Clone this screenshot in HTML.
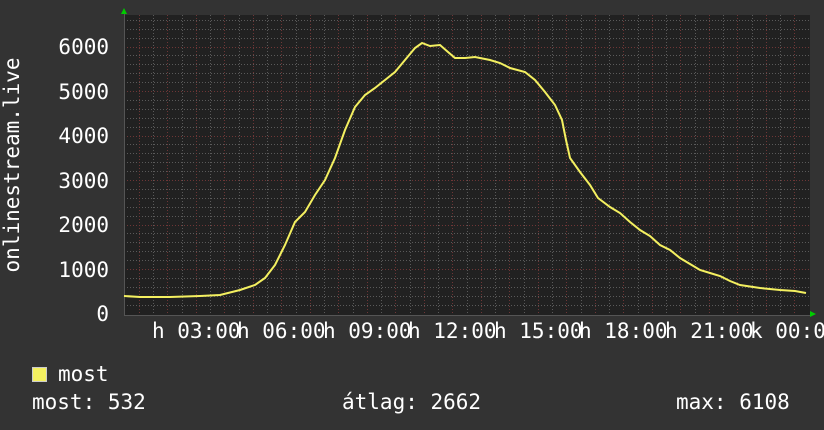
<!DOCTYPE html>
<html><head><style>
html,body{margin:0;padding:0;background:#333;}
svg{display:block}
text{font-family:"DejaVu Sans Mono","Liberation Mono",monospace;fill:#fff;font-size:21px}
</style></head><body>
<svg width="824" height="430" viewBox="0 0 824 430" xmlns="http://www.w3.org/2000/svg">
<rect width="824" height="430" fill="#333"/>
<rect x="124" y="15" width="686" height="300" fill="#212121"/>
<g stroke="#5a5a5a" stroke-width="1" stroke-dasharray="1,2">
<path d="M124 305.5H810M124 296.5H810M124 287.5H810M124 278.5H810M124 260.5H810M124 251.5H810M124 242.5H810M124 233.5H810M124 216.5H810M124 207.5H810M124 198.5H810M124 189.5H810M124 171.5H810M124 162.5H810M124 153.5H810M124 144.5H810M124 127.5H810M124 118.5H810M124 109.5H810M124 100.5H810M124 82.5H810M124 73.5H810M124 64.5H810M124 55.5H810M124 38.5H810M124 29.5H810M124 20.5H810"/>
<path d="M153.5 15V315M182.5 15V315M210.5 15V315M239.5 15V315M267.5 15V315M296.5 15V315M324.5 15V315M353.5 15V315M381.5 15V315M410.5 15V315M438.5 15V315M467.5 15V315M495.5 15V315M524.5 15V315M552.5 15V315M581.5 15V315M609.5 15V315M638.5 15V315M666.5 15V315M695.5 15V315M723.5 15V315M752.5 15V315M780.5 15V315"/>
</g>
<g stroke="#6e3636" stroke-width="1" stroke-dasharray="1,2">
<path d="M124 269.5H810M124 225.5H810M124 180.5H810M124 136.5H810M124 91.5H810M124 47.5H810"/>
<path d="M139.5 15V315M167.5 15V315M196.5 15V315M224.5 15V315M253.5 15V315M281.5 15V315M310.5 15V315M338.5 15V315M367.5 15V315M395.5 15V315M424.5 15V315M452.5 15V315M481.5 15V315M509.5 15V315M538.5 15V315M566.5 15V315M595.5 15V315M623.5 15V315M652.5 15V315M680.5 15V315M709.5 15V315M737.5 15V315M766.5 15V315M794.5 15V315"/>
</g>
<path d="M124 315.5H812M124.5 12V315" stroke="#555" stroke-width="1"/>
<polygon points="121,14 127,14 124,8" fill="#0c0"/>
<polygon points="810,311 810,317 816,314" fill="#0c0"/>
<polyline fill="none" stroke="#f4f060" stroke-width="2" points="124,296 140,297 170,297 200,296 220,295 240,290 255,285 265,278 275,265 285,245 295,222 305,212 315,195 325,180 335,158 345,130 355,107 365,95 375,88 385,80 395,72 405,60 415,48 422,43 430,46 440,45 448,52 455,58 465,58 475,57 490,60 500,63 510,68 525,72 535,80 545,92 555,105 562,120 566,140 570,158 580,172 590,185 598,198 610,207 620,213 630,222 640,230 650,236 660,245 670,250 680,258 690,264 700,270 710,273 720,276 730,281 740,285 760,288 780,290 795,291 806,293"/>
<g text-anchor="end">
<text x="109" y="54">6000</text><text x="109" y="99">5000</text><text x="109" y="143">4000</text>
<text x="109" y="188">3000</text><text x="109" y="232">2000</text><text x="109" y="277">1000</text>
<text x="109" y="321">0</text>
</g>
<text transform="translate(19,165) rotate(-90)" text-anchor="middle">onlinestream.live</text>
<g>
<text x="152" y="338">h 03:00</text><text x="237" y="338">h 06:00</text><text x="323" y="338">h 09:00</text>
<text x="408" y="338">h 12:00</text><text x="494" y="338">h 15:00</text><text x="579" y="338">h 18:00</text>
<text x="665" y="338">h 21:00</text><text x="750" y="338">k 00:00</text>
</g>
<rect x="32.5" y="367.5" width="14" height="14" fill="#f4f060" stroke="#ccc"/>
<text x="58" y="381">most</text>
<text x="32" y="409">most: 532</text>
<text x="342" y="409">átlag: 2662</text>
<text x="676" y="409">max: 6108</text>
</svg>
</body></html>
